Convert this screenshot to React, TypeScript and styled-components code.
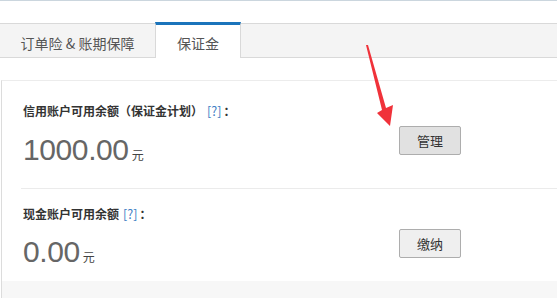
import React from "react";
import styled, { createGlobalStyle } from "styled-components";

const Global = createGlobalStyle`
  html, body { margin: 0; padding: 0; background: #fff; }
  body {
    font-family: "Liberation Sans", "Noto Sans CJK SC", sans-serif;
    color: #333;
    width: 557px;
    height: 298px;
    overflow: hidden;
  }
`;

const Page = styled.div`
  position: relative;
  width: 557px;
  height: 298px;
  border-top: 1px solid #cbd6de;
  box-sizing: border-box;
  display: flex;
  flex-direction: column;
`;

const TabBar = styled.div`
  margin-top: 22px;
  height: 33px;
  background: #f4f4f4;
  border-top: 1px solid #d9d9d9;
  border-bottom: 1px solid #d9d9d9;
  display: flex;
  align-items: stretch;
`;

const Tab = styled.div<{ $active?: boolean; $w: number }>`
  width: ${(p) => p.$w}px;
  box-sizing: border-box;
  display: flex;
  align-items: center;
  justify-content: center;
  font-family: "Noto Sans CJK SC", "Liberation Sans", sans-serif;
  font-size: 14px;
  color: #555;
  padding-top: ${(p) => (p.$active ? 3 : 5)}px;
  ${(p) =>
    p.$active &&
    `
    background: #fff;
    margin-top: -2px;
    margin-bottom: -1px;
    border-top: 3px solid #1b74bb;
    border-left: 1px solid #d9d9d9;
    border-right: 1px solid #d9d9d9;
  `}
`;

const Panel = styled.div`
  margin-top: 22px;
  margin-left: 1px;
  flex: 1;
  border-left: 1px solid #dcdcdc;
  border-top: 1px solid #ececec;
  display: flex;
  flex-direction: column;
`;

const Section = styled.div<{ $pt: number; $pb: number; $divider?: boolean }>`
  margin-left: 19px;
  padding-left: 2px;
  padding-top: ${(p) => p.$pt}px;
  padding-bottom: ${(p) => p.$pb}px;
  display: grid;
  grid-template-columns: 376px auto;
  border-bottom: ${(p) => (p.$divider ? "1px solid #ebebeb" : "none")};
`;

const Info = styled.div`
  display: flex;
  flex-direction: column;
`;

const Label = styled.div<{ $gap: number }>`
  font-family: "Noto Sans CJK SC", "Liberation Sans", sans-serif;
  font-size: 12px;
  font-weight: 700;
  line-height: 18px;
  height: 18px;
  color: #333;
  margin-bottom: ${(p) => p.$gap}px;
`;

const Help = styled.span`
  color: #3f7fc4;
  font-weight: 400;
  font-size: 12.5px;
  margin-left: 4px;
  margin-right: 2px;
`;

const Amount = styled.div`
  display: flex;
  align-items: baseline;
  line-height: 36px;
  height: 36px;
`;

const Number = styled.span`
  font-family: "Liberation Sans", sans-serif;
  font-size: 30px;
  color: #666;
  letter-spacing: -0.4px;
`;

const Unit = styled.span`
  font-family: "Noto Sans CJK SC", sans-serif;
  font-size: 12px;
  line-height: 12px;
  color: #444;
  margin-left: 3px;
`;

const Button = styled.button<{ $pressed?: boolean }>`
  margin-top: 24px;
  align-self: start;
  width: 62px;
  height: 29px;
  border: 1px solid #adadad;
  border-radius: 2px;
  background: ${(p) => (p.$pressed ? "#e1e1e1" : "#efefef")};
  font-family: "Noto Sans CJK SC", sans-serif;
  font-size: 13px;
  color: #333;
  padding: 0;
  cursor: pointer;
`;

const Footer = styled.div`
  flex: 1;
  background: #f7f7f7;
`;

const Arrow = styled.svg`
  position: absolute;
  left: 0;
  top: 0;
  pointer-events: none;
`;

export default function App() {
  return (
    <>
      <Global />
      <Page>
        <TabBar>
          <Tab $w={155}>订单险 &amp; 账期保障</Tab>
          <Tab $w={86} $active>
            保证金
          </Tab>
        </TabBar>
        <Panel>
          <Section $pt={21} $pb={20} $divider>
            <Info>
              <Label $gap={12}>
                信用账户可用余额（保证金计划）<Help>[?]</Help>：
              </Label>
              <Amount>
                <Number>1000.00</Number>
                <Unit>元</Unit>
              </Amount>
            </Info>
            <Button $pressed>管理</Button>
          </Section>
          <Section $pt={16} $pb={11}>
            <Info>
              <Label $gap={11}>
                现金账户可用余额<Help>[?]</Help>：
              </Label>
              <Amount>
                <Number>0.00</Number>
                <Unit>元</Unit>
              </Amount>
            </Info>
            <Button>缴纳</Button>
          </Section>
          <Footer />
        </Panel>
        <Arrow width="557" height="298" viewBox="0 0 557 298">
          <polygon
            points="366,44 368,44 386,107 393,104 390,125 377,112 382,109"
            fill="#f0323a"
          />
        </Arrow>
      </Page>
    </>
  );
}
